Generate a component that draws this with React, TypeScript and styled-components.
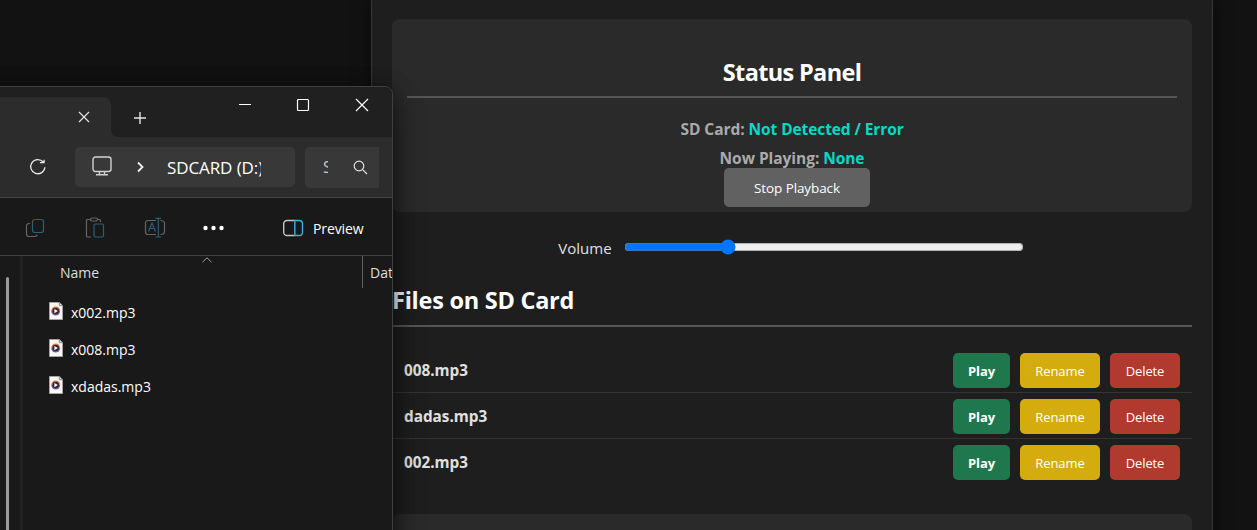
import React from 'react';
import styled, { createGlobalStyle } from 'styled-components';

const Global = createGlobalStyle`
  * { box-sizing: border-box; }
  body { margin: 0; background: #121212; overflow: hidden; font-family: "Open Sans", "Noto Sans", sans-serif; }
  h2 { margin: 0; }
`;

const Screen = styled.div`
  position: relative;
  height: 530px;
  overflow: hidden;
`;

/* ---------- player page ---------- */

const Container = styled.main`
  width: 842px;
  height: 560px;
  margin-left: 371px;
  padding: 19px 20px 0;
  background: #1e1e1e;
  border: 1px solid #383838;
  border-top: 0;
  box-shadow: 0 0 15px rgba(0, 0, 0, 0.5);
`;

const Panel = styled.section`
  height: 193px;
  padding: 35px 15px 0;
  display: flex;
  flex-direction: column;
  align-items: center;
  background: #2a2a2a;
  border-radius: 8px;
`;

const Heading = styled.h2<{ $center?: boolean }>`
  align-self: stretch;
  height: 44px;
  line-height: ${(p) => (p.$center ? 36 : 34)}px;
  font-size: 23.5px;
  font-weight: 700;
  letter-spacing: ${(p) => (p.$center ? -0.65 : -0.25)}px;
  white-space: nowrap;
  color: #fff;
  text-align: ${(p) => (p.$center ? 'center' : 'left')};
  border-bottom: 2px solid #555;
`;

const StatusLine = styled.p`
  margin: 0;
  height: 29px;
  line-height: 29px;
  font-size: 15.5px;
  font-weight: 700;
  letter-spacing: -0.04px;
  color: #aaa;
  white-space: nowrap;
  &:first-of-type { margin-top: 17px; }
`;

const StatusValue = styled.span`
  color: #03dac6;
  letter-spacing: -0.1px;
`;

const colors = { grey: '#616161', green: '#1f774d', yellow: '#d4ac0d', red: '#b03a2e' };

const Button = styled.button<{ $tone: keyof typeof colors; $width: number; $bold?: boolean }>`
  width: ${(p) => p.$width}px;
  height: 35px;
  padding: 1px 0 0;
  border: 0;
  border-radius: 5px;
  background: ${(p) => colors[p.$tone]};
  color: #fff;
  font-family: inherit;
  font-size: 13px;
  font-weight: ${(p) => (p.$bold ? 700 : 400)};
  letter-spacing: -0.1px;
  white-space: nowrap;
`;

const StopButton = styled(Button)`
  flex: none;
  height: 39px;
  margin-top: -5px;
  margin-left: 10px;
  font-size: 13.5px;
`;

const VolumeRow = styled.label`
  display: flex;
  align-items: center;
  justify-content: center;
  height: 24px;
  margin-top: 23px;
  gap: 12px;
  padding-right: 2px;
  font-size: 15px;
  color: #e0e0e0;
`;

const VolumeText = styled.span`
  padding-top: 1px;
`;

const Range = styled.input`
  width: 400px;
  height: 16px;
  margin: 0;
  color-scheme: light;
`;

const FileSection = styled.section`
  margin-top: 24px;
`;

const FileList = styled.ul`
  margin: 20px 0 0;
  padding: 0;
  list-style: none;
`;

const FileRow = styled.li`
  display: flex;
  align-items: center;
  gap: 10px;
  height: 46px;
  padding: 2px 12px 0;
  border-bottom: 1px solid #333;
  &:last-child { border-bottom-color: transparent; }
`;

const FileName = styled.span`
  flex: 1;
  padding-bottom: 2px;
  font-size: 15.3px;
  font-weight: 700;
  color: #e0e0e0;
`;

const NextPanel = styled.section`
  height: 60px;
  margin-top: 29px;
  background: #2a2a2a;
  border-radius: 8px;
`;

/* ---------- explorer window ---------- */

const Window = styled.aside`
  position: absolute;
  left: -20px;
  top: 86px;
  width: 413px;
  height: 480px;
  padding-left: 20px;
  overflow: hidden;
  background: #191919;
  border: 1px solid #404040;
  border-radius: 8px;
  box-shadow: 0 16px 32px rgba(0, 0, 0, 0.45), 0 2px 20px rgba(0, 0, 0, 0.4);
  color: #fff;
`;

const TitleBar = styled.header`
  display: flex;
  height: 50px;
  margin-left: -20px;
  padding-left: 19px;
  background: #202020;
`;

const Tab = styled.div`
  position: relative;
  display: flex;
  align-items: center;
  justify-content: flex-end;
  width: 111px;
  height: 40px;
  margin-top: 10px;
  padding-right: 21px;
  background: #2c2c2c;
  border-radius: 0 8px 0 0;
  &::after {
    content: '';
    position: absolute;
    left: 100%;
    bottom: 0;
    width: 6px;
    height: 6px;
    background: radial-gradient(circle at 100% 0, transparent 5.5px, #2c2c2c 6px);
  }
`;

const NewTab = styled.div`
  display: flex;
  align-items: center;
  padding: 11px 0 0 22px;
`;

const Controls = styled.div`
  display: flex;
  gap: 45px;
  margin-left: auto;
  padding: 11px 23px 0 0;
`;

const AddressBar = styled.div`
  display: flex;
  align-items: center;
  height: 61px;
  margin-left: -20px;
  padding: 0 13px 0 48px;
  background: #2c2c2c;
  border-bottom: 1px solid #454545;
`;

const Field = styled.div<{ $width: number; $search?: boolean }>`
  display: flex;
  align-items: center;
  width: ${(p) => p.$width}px;
  height: ${(p) => (p.$search ? 41 : 40)}px;
  padding-left: 17px;
  margin-left: ${(p) => (p.$search ? 10 : 28)}px;
  background: #383838;
  border-radius: ${(p) => (p.$search ? '5px 0 0 5px' : '5px')};
`;

const PathText = styled.span`
  width: 94px;
  margin-left: 23px;
  overflow: hidden;
  white-space: nowrap;
  font-size: 17px;
  letter-spacing: -0.1px;
`;

const SearchHint = styled.span`
  width: 5px;
  margin: 0 1px;
  overflow: hidden;
  font-size: 16px;
  color: #c5c5c5;
`;

const Toolbar = styled.div`
  display: flex;
  align-items: center;
  height: 58px;
  margin-left: -20px;
  padding: 3px 0 0 42px;
  border-bottom: 1px solid #404040;
`;

const PreviewLabel = styled.span`
  margin-left: 9px;
  font-size: 14px;
  letter-spacing: -0.1px;
`;

const Body = styled.div`
  display: flex;
  height: 280px;
`;

const NavPane = styled.div`
  flex: none;
  width: 23px;
  margin-left: -1px;
  padding: 21px 0 0 6px;
  border-right: 3px solid #222;
`;

const Scrollbar = styled.div`
  width: 3px;
  height: 260px;
  border-radius: 2px;
  background: #9a9a9a;
`;

const Listing = styled.div`
  flex: 1;
  min-width: 0;
`;

const Columns = styled.div`
  display: flex;
  height: 38px;
  font-size: 14px;
  line-height: 33px;
  color: #dedede;
`;

const NameColumn = styled.div`
  display: flex;
  flex: none;
  width: 340px;
  height: 32px;
  padding-left: 37px;
  border-right: 1px solid #636363;
`;

const SortMark = styled.svg`
  margin: 1px 0 0 103px;
`;

const DateColumn = styled.div`
  padding-left: 7px;
`;

const Entry = styled.div`
  display: flex;
  align-items: center;
  height: 37px;
  padding-left: 26px;
  gap: 8px;
  font-size: 14px;
`;

const Stroke = styled.svg<{ $left?: number; $up?: number }>`
  display: block;
  flex: none;
  fill: none;
  margin-left: ${(p) => p.$left ?? 0}px;
  margin-bottom: ${(p) => p.$up ?? 0}px;
`;

const Mp3Icon = () => (
  <Stroke width="14" height="18" viewBox="0 0 14 18" $up={3}>
    <path d="M.5.5h9.8l3.2 3.2v13.8H.5z" fill="#f7f7f7" stroke="#a3a3a3" />
    <path d="M10.3.5v3.2h3.2" stroke="#858585" />
    <path d="M2.2 9a4.5 4.5 0 0 1 9 0" fill="#e8793f" />
    <path d="M2.2 9a4.5 4.5 0 0 0 9 0" fill="#8e5f9d" />
    <circle cx="6.7" cy="9.1" r="3.3" fill="#292b38" />
    <path d="M5.4 6.900v4.400l3.400-2.200z" fill="#fff" />
  </Stroke>
);

const files = ['008.mp3', 'dadas.mp3', '002.mp3'];
const entries = ['x002.mp3', 'x008.mp3', 'xdadas.mp3'];

export default function App() {
  return (
    <Screen>
      <Global />
      <Container>
        <Panel>
          <Heading $center>Status Panel</Heading>
          <StatusLine>
            SD Card: <StatusValue>Not Detected / Error</StatusValue>
          </StatusLine>
          <StatusLine>
            Now Playing: <StatusValue>None</StatusValue>
          </StatusLine>
          <StopButton $tone="grey" $width={146}>Stop Playback</StopButton>
        </Panel>
        <VolumeRow>
          <VolumeText>Volume</VolumeText>
          <Range type="range" min={0} max={100} defaultValue={25} />
        </VolumeRow>
        <FileSection>
          <Heading>Files on SD Card</Heading>
          <FileList>
            {files.map((name) => (
              <FileRow key={name}>
                <FileName>{name}</FileName>
                <Button $tone="green" $width={57} $bold>Play</Button>
                <Button $tone="yellow" $width={80}>Rename</Button>
                <Button $tone="red" $width={70}>Delete</Button>
              </FileRow>
            ))}
          </FileList>
        </FileSection>
        <NextPanel />
      </Container>

      <Window>
        <TitleBar>
          <Tab>
            <Stroke width="12" height="12" stroke="#e4e4e4" strokeWidth="1.2">
              <path d="M1 1l10 10M11 1L1 11" />
            </Stroke>
          </Tab>
          <NewTab>
            <Stroke width="14" height="14" stroke="#e4e4e4" strokeWidth="1.4">
              <path d="M7 1v12M1 7h12" />
            </Stroke>
          </NewTab>
          <Controls>
            <Stroke width="13" height="14" stroke="#fff"><path d="M1 6.5h12" /></Stroke>
            <Stroke width="14" height="14" stroke="#fff" strokeWidth="1.2">
              <rect x="1.5" y="1.5" width="11" height="11" rx="1" />
            </Stroke>
            <Stroke width="14" height="14" stroke="#fff" strokeWidth="1.2">
              <path d="M1 1l12 12M13 1L1 13" />
            </Stroke>
          </Controls>
        </TitleBar>

        <AddressBar>
          <Stroke width="18" height="18" stroke="#e8e8e8" strokeWidth="1.3">
            <path d="M14.200 4A7.100 7.100 0 1 0 15.900 9.200M10.900 4.700h4.200V1.800" />
          </Stroke>
          <Field $width={220}>
            <Stroke width="20" height="20" stroke="#d2d2d2" strokeWidth="1.4" $up={2}>
              <rect x="1" y="1" width="18" height="14.5" rx="2.5" />
              <path d="M7.5 15.5v3M12.5 15.5v3M4 18.7h12" />
            </Stroke>
            <Stroke width="8" height="12" stroke="#eee" strokeWidth="1.8" $left={24}>
              <path d="M2 1.500L6.500 6 2 10.500" />
            </Stroke>
            <PathText>SDCARD (D:)</PathText>
          </Field>
          <Field $width={74} $search>
            <SearchHint>S</SearchHint>
            <Stroke width="15" height="15" stroke="#e0e0e0" strokeWidth="1.2" $left={24}>
              <circle cx="6" cy="6" r="4.800" />
              <path d="M9.600 9.600L14 14" />
            </Stroke>
          </Field>
        </AddressBar>

        <Toolbar>
          <Stroke width="20" height="20" strokeWidth="1.2" $left={2}>
            <rect x="7.500" y="1.500" width="11" height="13" rx="2.500" stroke="#2b5f7b" />
            <path d="M5 5.500H4A2.500 2.500 0 0 0 1.500 8v8A2.500 2.500 0 0 0 4 18.500h5.500q2.200 0 2.800-1.700" stroke="#656565" />
          </Stroke>
          <Stroke width="20" height="22" strokeWidth="1.2" $left={40}>
            <path d="M6 2.500H2.500q-1 0-1 1v15.500q0 1 1 1H6M12 2.500h2.500q1 0 1 1V5M5.500 2.500a1.500 1.500 0 0 1 1.500-1.500h4a1.500 1.500 0 0 1 0 3H7a1.500 1.500 0 0 1-1.500-1.500z" stroke="#656565" />
            <rect x="9" y="7" width="9.500" height="13" rx="1.500" stroke="#2b5f7b" />
          </Stroke>
          <Stroke width="22" height="22" strokeWidth="1.2" $left={39}>
            <path d="M12 3.500H4A2.500 2.500 0 0 0 1.500 6v9A2.500 2.500 0 0 0 4 17.500h8M16.500 3.500q4 0 4 3v8q0 3-4 3" stroke="#656565" />
            <path d="M14.300 1.500v18.500M11.500 1.300h5.500M11.500 20h5.500M4.500 14.500L8 6l3.500 8.500M5.700 11.500h4.600" stroke="#2b5f7b" />
          </Stroke>
          <Stroke width="22" height="6" $left={37}>
            <g fill="#fff">
              <circle cx="2.500" cy="3" r="2.200" />
              <circle cx="10.500" cy="3" r="2.200" />
              <circle cx="18.500" cy="3" r="2.200" />
            </g>
          </Stroke>
          <Stroke width="22" height="18" strokeWidth="1.400" $left={57}>
            <path d="M12.500 1.500H5A3.300 3.300 0 0 0 1.700 4.800v8.400A3.300 3.300 0 0 0 5 16.500h7.500" stroke="#c4c4c4" />
            <path d="M12.800 1.500h4.400a3.300 3.300 0 0 1 3.300 3.300v8.400a3.300 3.300 0 0 1-3.300 3.300h-4.400z" stroke="#43aee2" />
          </Stroke>
          <PreviewLabel>Preview</PreviewLabel>
        </Toolbar>

        <Body>
          <NavPane><Scrollbar /></NavPane>
          <Listing>
            <Columns>
              <NameColumn>
                Name
                <SortMark width="10" height="6" fill="none" stroke="#a0a0a0">
                  <path d="M.5 5.200L5 .8l4.500 4.400" />
                </SortMark>
              </NameColumn>
              <DateColumn>Date</DateColumn>
            </Columns>
            {entries.map((name) => (
              <Entry key={name}><Mp3Icon />{name}</Entry>
            ))}
          </Listing>
        </Body>
      </Window>
    </Screen>
  );
}
